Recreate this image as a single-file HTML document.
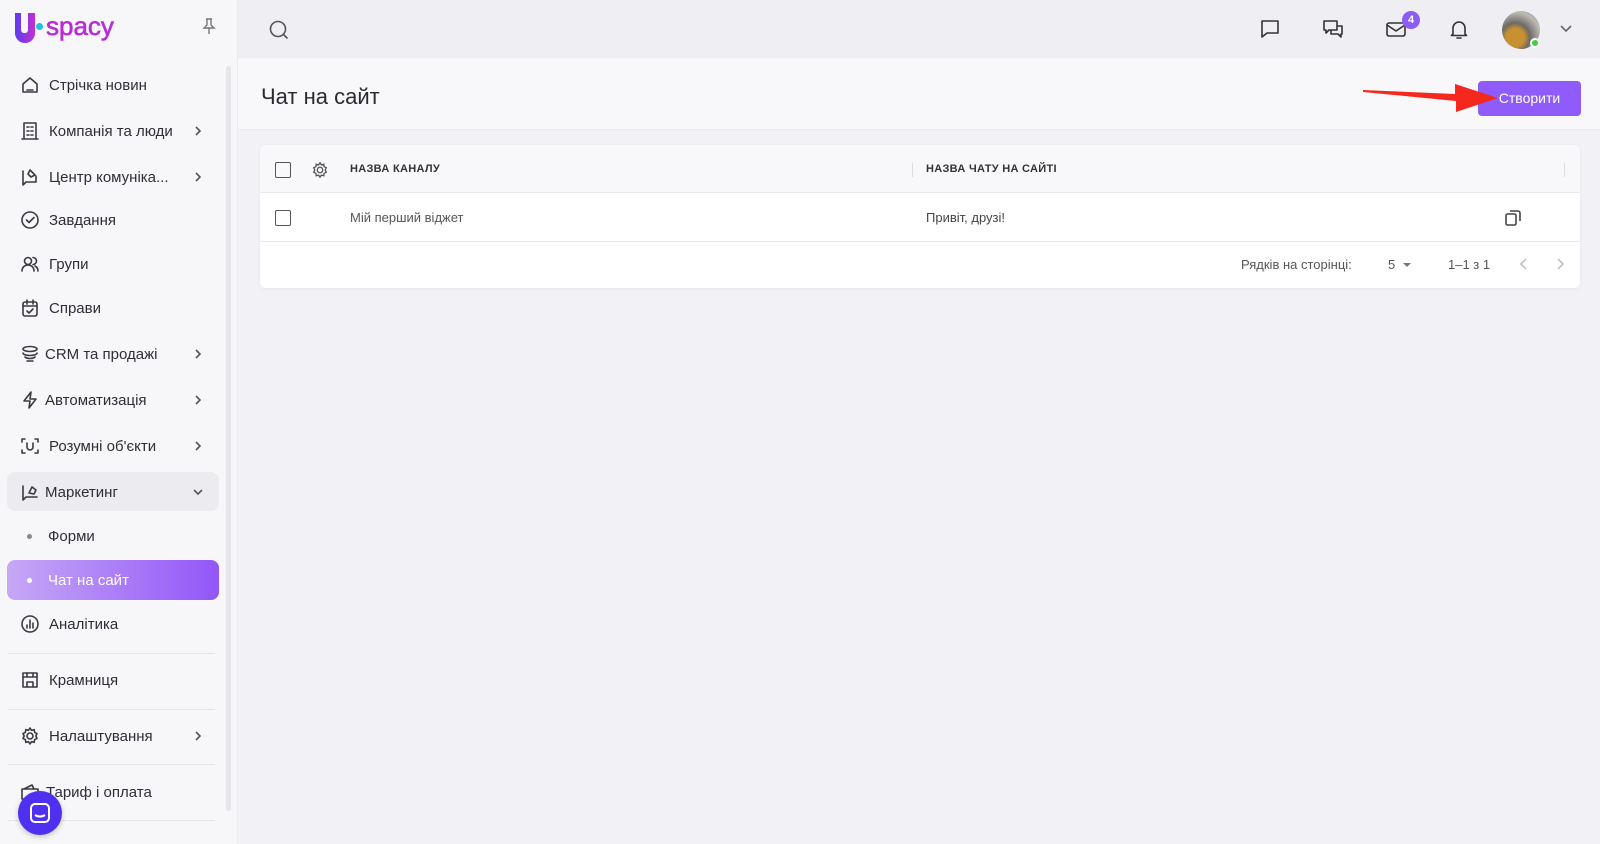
<!DOCTYPE html>
<html><head><meta charset="utf-8"><style>
*{box-sizing:border-box;margin:0;padding:0}
body{width:1600px;height:844px;overflow:hidden;background:#f2f2f6;font-family:"Liberation Sans",sans-serif;color:#2b2b33;position:relative}
.side{position:absolute;left:0;top:0;width:238px;height:844px;background:#f7f7f9;border-right:1px solid #ececf0}
.item{position:absolute;left:0;width:230px;height:40px;display:flex;align-items:center;font-size:15px;color:#2e2e36}
.item svg.ic{position:absolute;left:20px;width:20px;height:20px;fill:none;stroke:#3a3a42;stroke-width:1.6;stroke-linecap:round;stroke-linejoin:round}
.item span{position:absolute;left:49px}
.item .chev{position:absolute;left:192px;width:12px;height:12px;fill:none;stroke:#555;stroke-width:1.6}
.div{position:absolute;left:8px;width:207px;height:1px;background:#e3e3e8}
.top{position:absolute;left:238px;top:0;right:0;height:58px;background:#efeff3}
.hdr{position:absolute;left:238px;top:58px;right:0;height:72px;background:#f8f8fa;border-bottom:1px solid #ebebef}
.ticon{position:absolute;top:18px;width:22px;height:22px;fill:none;stroke:#333;stroke-width:1.6;stroke-linecap:round;stroke-linejoin:round}
.card{position:absolute;left:260px;top:145px;width:1320px;height:143px;background:#fff;border-radius:6px;box-shadow:0 1px 3px rgba(0,0,0,.05);overflow:hidden}
.cb{position:absolute;width:16px;height:16px;border:1.8px solid #555;border-radius:2px}
</style></head><body>
<div class="side">
  <div style="position:absolute;left:15px;top:13px;width:20px;height:30px;border-radius:0 0 10px 10px;background:linear-gradient(90deg,#5b3cf0,#c42fd0)"></div>
  <div style="position:absolute;left:21px;top:12px;width:7px;height:21px;background:#f7f7f9;border-radius:0 0 3px 3px"></div>
  <div style="position:absolute;left:36px;top:23px;width:7px;height:7px;border-radius:50%;background:#1fc0e6"></div>
  <div style="position:absolute;left:46px;top:11px;font-size:26px;color:#b62ed4;letter-spacing:0px;-webkit-text-stroke:0.6px #b62ed4">spacy</div>
  <svg style="position:absolute;left:201px;top:17px" width="16" height="18" viewBox="0 0 16 18" fill="none" stroke="#777" stroke-width="1.4"><path d="M5 2h6M6 2v6l-3 3h10l-3-3V2M8 11v6"/></svg>
  <div style="position:absolute;left:226px;top:66px;width:5px;height:745px;background:#e6e6ea;border-radius:3px"></div>

  <div class="item" style="top:65px"><svg class="ic" viewBox="0 0 20 20"><path d="M3 9l7-6 7 6v8H3z M7 15h6"/></svg><span>Стрічка новин</span></div>
  <div class="item" style="top:111px"><svg class="ic" viewBox="0 0 20 20"><path d="M4 2h12v16H4z M2 18h16 M7 6h2M11 6h2M7 10h2M11 10h2M7 14h2M11 14h2"/></svg><span>Компанія та люди</span><svg class="chev" viewBox="0 0 12 12"><path d="M4 2l4 4-4 4"/></svg></div>
  <div class="item" style="top:157px"><svg class="ic" viewBox="0 0 20 20"><path d="M3 4v14l3-3h10V9 M10 3l5 5-4 2-3-3z"/></svg><span>Центр комуніка...</span><svg class="chev" viewBox="0 0 12 12"><path d="M4 2l4 4-4 4"/></svg></div>
  <div class="item" style="top:200px"><svg class="ic" viewBox="0 0 20 20"><circle cx="10" cy="10" r="8"/><path d="M6.5 10l2.5 2.5 5-5"/></svg><span>Завдання</span></div>
  <div class="item" style="top:244px"><svg class="ic" viewBox="0 0 20 20"><circle cx="8" cy="7" r="3.5"/><path d="M2 17c0-4 3-6 6-6s6 2 6 6 M13 3.5a3.5 3.5 0 010 7 M15 12c2 1 3 3 3 5"/></svg><span>Групи</span></div>
  <div class="item" style="top:288px"><svg class="ic" viewBox="0 0 20 20"><rect x="3" y="4" width="14" height="14" rx="2"/><path d="M3 8h14M7 2v4M13 2v4M7 13l2 2 4-4"/></svg><span>Справи</span></div>
  <div class="item" style="top:334px"><svg class="ic" viewBox="0 0 20 20"><ellipse cx="10" cy="5" rx="7" ry="2.5"/><path d="M3 9c0 1.4 3 2.5 7 2.5s7-1.1 7-2.5M5 13c1 1 3 1.5 5 1.5s4-.5 5-1.5M7 17h6"/></svg><span style="left:45px">CRM та продажі</span><svg class="chev" viewBox="0 0 12 12"><path d="M4 2l4 4-4 4"/></svg></div>
  <div class="item" style="top:380px"><svg class="ic" viewBox="0 0 20 20"><path d="M11 2L4 11h6l-1 7 7-9h-6z"/></svg><span style="left:45px">Автоматизація</span><svg class="chev" viewBox="0 0 12 12"><path d="M4 2l4 4-4 4"/></svg></div>
  <div class="item" style="top:426px"><svg class="ic" viewBox="0 0 20 20"><path d="M2 6V3h3M15 3h3v3M18 14v3h-3M5 17H2v-3M7 7v4a3 3 0 006 0V7"/></svg><span>Розумні об'єкти</span><svg class="chev" viewBox="0 0 12 12"><path d="M4 2l4 4-4 4"/></svg></div>
  <div style="position:absolute;left:7px;top:472px;width:212px;height:39px;background:#ececf0;border-radius:8px"></div>
  <div class="item" style="top:472px"><svg class="ic" viewBox="0 0 20 20"><path d="M3 4v14l3-3h11 M9 11l3-6 4 3-2 4z"/></svg><span style="left:45px">Маркетинг</span><svg class="chev" viewBox="0 0 12 12"><path d="M2 4l4 4 4-4"/></svg></div>
  <div style="position:absolute;left:27px;top:534px;width:5px;height:5px;border-radius:50%;background:#888"></div>
  <div class="item" style="top:516px"><span style="left:48px">Форми</span></div>
  <div style="position:absolute;left:7px;top:560px;width:212px;height:40px;border-radius:8px;background:linear-gradient(90deg,#c6a8f6,#9256f8)"></div>
  <div style="position:absolute;left:27px;top:578px;width:5px;height:5px;border-radius:50%;background:#fff"></div>
  <div class="item" style="top:560px;color:#fff"><span style="left:48px">Чат на сайт</span></div>
  <div class="item" style="top:604px"><svg class="ic" viewBox="0 0 20 20"><circle cx="10" cy="10" r="8"/><path d="M7 14v-3M10 14V6M13 14V9"/></svg><span>Аналітика</span></div>
  <div class="div" style="top:653px"></div>
  <div class="item" style="top:660px"><svg class="ic" viewBox="0 0 20 20"><rect x="3" y="3" width="14" height="14"/><path d="M3 7h14M7 3v4M13 3v4M7 17v-5h6v5"/></svg><span>Крамниця</span></div>
  <div class="div" style="top:709px"></div>
  <div class="item" style="top:716px"><svg class="ic" viewBox="0 0 20 20"><circle cx="10" cy="10" r="3"/><path d="M10 2l1.5 2.3 2.7-.7.4 2.7 2.4 1.3-1.2 2.4 1.2 2.4-2.4 1.3-.4 2.7-2.7-.7L10 18l-1.5-2.3-2.7.7-.4-2.7L3 12.4 4.2 10 3 7.6l2.4-1.3.4-2.7 2.7.7z"/></svg><span>Налаштування</span><svg class="chev" viewBox="0 0 12 12"><path d="M4 2l4 4-4 4"/></svg></div>
  <div class="div" style="top:764px"></div>
  <div class="item" style="top:772px"><svg class="ic" viewBox="0 0 20 20"><path d="M2 7h16v10H2z M4 7l8-4 2 4"/></svg><span style="left:46px">Тариф і оплата</span></div>
  <div class="div" style="top:820px"></div>
  <div style="position:absolute;left:18px;top:791px;width:44px;height:44px;border-radius:50%;background:#4f2ff0;box-shadow:0 2px 6px rgba(0,0,0,.2)"><svg width="44" height="44" viewBox="0 0 44 44" fill="none" stroke="#fff" stroke-width="2"><rect x="13" y="13" width="18" height="18" rx="4"/><path d="M17 24c3 2 7 2 10 0"/></svg></div>
</div>

<div class="top">
  <svg style="position:absolute;left:30px;top:19px" width="22" height="22" viewBox="0 0 22 22" fill="none" stroke="#555" stroke-width="1.6"><circle cx="10" cy="10" r="7.5"/><path d="M15.5 15.5l4 4"/></svg>
</div>
<svg class="ticon" style="left:1259px" viewBox="0 0 22 22"><path d="M3 3h16v12H8l-5 4z"/></svg>
<svg class="ticon" style="left:1322px" viewBox="0 0 22 22"><path d="M2 3h13v9H7l-3 3v-3H2z M9 12v4h7l3 3v-3h1V8h-5"/></svg>
<svg class="ticon" style="left:1385px" viewBox="0 0 22 22"><rect x="2" y="5" width="18" height="13" rx="2"/><path d="M2 7l9 6 9-6"/></svg>
<div style="position:absolute;left:1402px;top:11px;width:18px;height:18px;border-radius:50%;background:#8b5cf6;color:#fff;font-size:11px;text-align:center;line-height:18px;font-weight:bold">4</div>
<svg class="ticon" style="left:1448px" viewBox="0 0 22 22"><path d="M5 16V10a6 6 0 0112 0v6l1.5 1.5h-15z M9 20h4"/></svg>
<div style="position:absolute;left:1502px;top:11px;width:38px;height:38px;border-radius:50%;background:radial-gradient(circle at 35% 70%,#c89030 0 25%,#6d6a66 40%,#bdbab4 70%,#888 100%)"></div>
<div style="position:absolute;left:1530px;top:38px;width:10px;height:10px;border-radius:50%;background:#3fcf3f;border:2px solid #fff"></div>
<svg style="position:absolute;left:1559px;top:23px" width="14" height="12" viewBox="0 0 14 12" fill="none" stroke="#666" stroke-width="1.6"><path d="M2 3l5 5 5-5"/></svg>

<div class="hdr">
  <div style="position:absolute;left:23px;top:26px;font-size:22px;color:#2a2a30">Чат на сайт</div>
</div>
<div style="position:absolute;left:1478px;top:81px;width:103px;height:35px;background:#8f5cfb;border-radius:4px;color:#fff;font-size:14px;text-align:center;line-height:35px">Створити</div>
<svg style="position:absolute;left:1360px;top:80px" width="140" height="34" viewBox="0 0 140 34"><path d="M3 10 L95 14 L95 4 L138 18 L96 32 L96 21 L3 12z" fill="#f5281d"/></svg>

<div class="card">
  <div style="position:absolute;left:0;top:0;width:100%;height:48px;background:#f8f8fa;border-bottom:1px solid #e9e9ee"></div>
  <div class="cb" style="left:15px;top:17px"></div>
  <svg style="position:absolute;left:51px;top:16px" width="18" height="18" viewBox="0 0 20 20" fill="none" stroke="#555" stroke-width="1.5"><circle cx="10" cy="10" r="3"/><path d="M10 2l1.5 2.3 2.7-.7.4 2.7 2.4 1.3-1.2 2.4 1.2 2.4-2.4 1.3-.4 2.7-2.7-.7L10 18l-1.5-2.3-2.7.7-.4-2.7L3 12.4 4.2 10 3 7.6l2.4-1.3.4-2.7 2.7.7z"/></svg>
  <div style="position:absolute;left:90px;top:18px;font-size:11px;font-weight:bold;color:#333;letter-spacing:.3px">НАЗВА КАНАЛУ</div>
  <div style="position:absolute;left:652px;top:18px;width:1px;height:14px;background:#ddd"></div>
  <div style="position:absolute;left:666px;top:18px;font-size:11px;font-weight:bold;color:#333;letter-spacing:.3px">НАЗВА ЧАТУ НА САЙТІ</div>
  <div style="position:absolute;left:1304px;top:18px;width:1px;height:14px;background:#ddd"></div>
  <div class="cb" style="left:15px;top:65px"></div>
  <div style="position:absolute;left:90px;top:65px;font-size:13px;color:#555">Мій перший віджет</div>
  <div style="position:absolute;left:666px;top:65px;font-size:13px;color:#444">Привіт, друзі!</div>
  <svg style="position:absolute;left:1244px;top:64px" width="18" height="18" viewBox="0 0 18 18" fill="none" stroke="#444" stroke-width="1.6"><rect x="2" y="5" width="10" height="11" rx="1.5"/><path d="M6 2h8a2 2 0 012 2v8"/></svg>
  <div style="position:absolute;left:0;top:96px;width:100%;height:1px;background:#e9e9ee"></div>
  <div style="position:absolute;left:981px;top:112px;font-size:13px;color:#555">Рядків на сторінці:</div>
  <div style="position:absolute;left:1128px;top:112px;font-size:13px;color:#555">5</div>
  <div style="position:absolute;left:1143px;top:118px;border-left:4px solid transparent;border-right:4px solid transparent;border-top:4px solid #777"></div>
  <div style="position:absolute;left:1188px;top:112px;font-size:13px;color:#555">1–1 з 1</div>
  <svg style="position:absolute;left:1258px;top:112px" width="12" height="14" viewBox="0 0 12 14" fill="none" stroke="#bbb" stroke-width="1.5"><path d="M8 2L3 7l5 5"/></svg>
  <svg style="position:absolute;left:1294px;top:112px" width="12" height="14" viewBox="0 0 12 14" fill="none" stroke="#bbb" stroke-width="1.5"><path d="M4 2l5 5-5 5"/></svg>
</div>
</body></html>
